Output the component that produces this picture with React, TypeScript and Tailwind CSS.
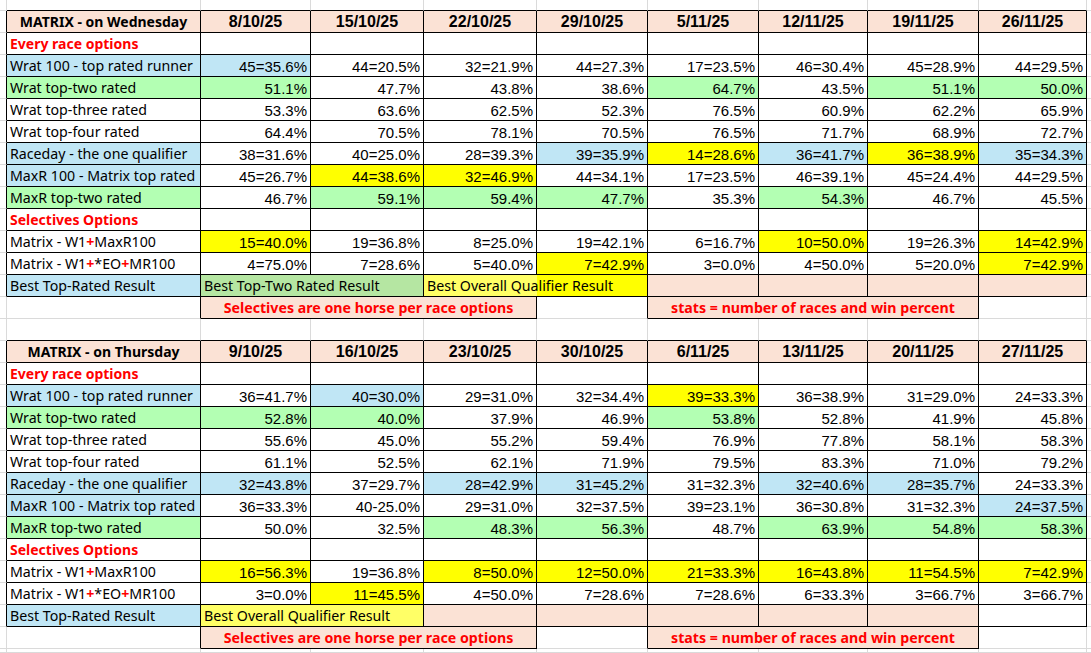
import React from "react";

const BLUE = "bg-[#c0e6f5]";
const GREEN = "bg-[#b3ffb3]";
const YEL = "bg-[#ffff00]";
const PEACH = "bg-[#fbe2d5]";
const PALE = "bg-[#ffff66]";
const G2 = "bg-[#b5e6a2]";
const SPLITY = "bg-[linear-gradient(to_right,#ffff66_113px,#ffff00_113px)]";

type Kind = "label" | "data" | "head" | "date" | "red" | "note" | "box" | "none";
type Cell = { span?: number; inT?: boolean; bg?: string; c?: React.ReactNode; k?: Kind };
type Row = { h: string; cells: Cell[] };

const SPAN: Record<number, string> = {
  1: "col-span-1",
  2: "col-span-2",
  3: "col-span-3",
  4: "col-span-4",
};

const KIND: Record<Kind, string> = {
  label: "justify-start pl-[3px] pt-[1px] font-['Noto_Sans',sans-serif] text-[14.2px] text-black",
  box: "justify-start pl-[3px] pt-[1px] font-['Noto_Sans',sans-serif] text-[14.2px] text-black",
  data: "justify-end pr-[3px] pt-[1px] font-['Liberation_Sans',Arial,sans-serif] text-[15px] text-black",
  head: "justify-center pt-[1px] font-['Noto_Sans',sans-serif] text-[14px] font-bold text-black",
  date: "justify-center pt-[1px] font-['Liberation_Sans',Arial,sans-serif] text-[16px] font-bold text-black",
  red: "justify-start pl-[3px] pt-[1px] font-['Noto_Sans',sans-serif] text-[14px] font-bold text-[#ff0000]",
  note: "justify-center pt-[1px] font-['Noto_Sans',sans-serif] text-[14.2px] font-bold text-[#ff0000]",
  none: "",
};

const P = () => <span className="font-bold text-[#ff0000]">+</span>;

const blank = (n = 1, inT = false): Cell => ({ span: n, inT, k: "none" });

function dataCells(vals: string[]): Cell[] {
  return vals.map((v) => {
    const [t, code] = v.split("|");
    const bg = code === "b" ? BLUE : code === "g" ? GREEN : code === "y" ? YEL : "";
    return { inT: true, bg, c: t, k: "data" as Kind };
  });
}

function line(label: Cell, vals: string[] | null): Row {
  const d = vals ? dataCells(vals) : Array.from({ length: 8 }, () => blank(1, true));
  return { h: "h-[22px]", cells: [blank(), label, ...d, blank()] };
}

type TableDef = {
  title: string;
  dates: string[];
  rows: string[][];
  best: Cell[];
};

function tableRows(t: TableDef): Row[] {
  const labels: [React.ReactNode, string][] = [
    ["Wrat 100 - top rated runner", BLUE],
    ["Wrat top-two rated", GREEN],
    ["Wrat top-three rated", ""],
    ["Wrat top-four rated", ""],
    ["Raceday - the one qualifier", BLUE],
    ["MaxR 100 - Matrix top rated", BLUE],
    ["MaxR top-two rated", GREEN],
  ];
  const out: Row[] = [];
  out.push({
    h: "h-[22px]",
    cells: [
      blank(),
      { inT: true, bg: PEACH, c: t.title, k: "head" },
      ...t.dates.map((d) => ({ inT: true, bg: PEACH, c: d, k: "date" as Kind })),
      blank(),
    ],
  });
  out.push(line({ inT: true, c: "Every race options", k: "red" }, null));
  labels.forEach(([l, bg], i) => out.push(line({ inT: true, bg, c: l, k: "label" }, t.rows[i])));
  out.push(line({ inT: true, c: "Selectives Options", k: "red" }, null));
  out.push(
    line(
      {
        inT: true,
        k: "label",
        c: (
          <>
            Matrix - W1<P />MaxR100
          </>
        ),
      },
      t.rows[7]
    )
  );
  out.push(
    line(
      {
        inT: true,
        k: "label",
        c: (
          <>
            Matrix - W1<P />*EO<P />MR100
          </>
        ),
      },
      t.rows[8]
    )
  );
  out.push({
    h: "h-[22px]",
    cells: [blank(), { inT: true, bg: BLUE, c: "Best Top-Rated Result", k: "label" }, ...t.best, blank()],
  });
  out.push({
    h: "h-[22px]",
    cells: [
      blank(),
      blank(),
      { span: 3, inT: true, bg: PEACH, c: "Selectives are one horse per race options", k: "note" },
      blank(),
      { span: 3, inT: true, bg: PEACH, c: "stats = number of races and win percent", k: "note" },
      blank(),
      blank(),
    ],
  });
  return out;
}

const T1: TableDef = {
  title: "MATRIX - on Wednesday",
  dates: ["8/10/25", "15/10/25", "22/10/25", "29/10/25", "5/11/25", "12/11/25", "19/11/25", "26/11/25"],
  rows: [
    ["45=35.6%|b", "44=20.5%", "32=21.9%", "44=27.3%", "17=23.5%", "46=30.4%", "45=28.9%", "44=29.5%"],
    ["51.1%|g", "47.7%", "43.8%", "38.6%", "64.7%|g", "43.5%", "51.1%|g", "50.0%|g"],
    ["53.3%", "63.6%", "62.5%", "52.3%", "76.5%", "60.9%", "62.2%", "65.9%"],
    ["64.4%", "70.5%", "78.1%", "70.5%", "76.5%", "71.7%", "68.9%", "72.7%"],
    ["38=31.6%", "40=25.0%", "28=39.3%", "39=35.9%|b", "14=28.6%|y", "36=41.7%|b", "36=38.9%|y", "35=34.3%|b"],
    ["45=26.7%", "44=38.6%|y", "32=46.9%|y", "44=34.1%", "17=23.5%", "46=39.1%", "45=24.4%", "44=29.5%"],
    ["46.7%", "59.1%|g", "59.4%|g", "47.7%|g", "35.3%", "54.3%|g", "46.7%", "45.5%"],
    ["15=40.0%|y", "19=36.8%", "8=25.0%", "19=42.1%", "6=16.7%", "10=50.0%|y", "19=26.3%", "14=42.9%|y"],
    ["4=75.0%", "7=28.6%", "5=40.0%", "7=42.9%|y", "3=0.0%", "4=50.0%", "5=20.0%", "7=42.9%|y"],
  ],
  best: [
    { span: 2, inT: true, bg: G2, c: "Best Top-Two Rated Result", k: "box" },
    { span: 2, inT: true, bg: SPLITY, c: "Best Overall Qualifier Result", k: "box" },
    { inT: true, bg: PEACH, k: "none" },
    { inT: true, bg: PEACH, k: "none" },
    { inT: true, bg: PEACH, k: "none" },
    { inT: true, bg: PEACH, k: "none" },
  ],
};

const T2: TableDef = {
  title: "MATRIX - on Thursday",
  dates: ["9/10/25", "16/10/25", "23/10/25", "30/10/25", "6/11/25", "13/11/25", "20/11/25", "27/11/25"],
  rows: [
    ["36=41.7%", "40=30.0%|b", "29=31.0%", "32=34.4%", "39=33.3%|y", "36=38.9%", "31=29.0%", "24=33.3%"],
    ["52.8%|g", "40.0%|g", "37.9%", "46.9%", "53.8%|g", "52.8%", "41.9%", "45.8%"],
    ["55.6%", "45.0%", "55.2%", "59.4%", "76.9%", "77.8%", "58.1%", "58.3%"],
    ["61.1%", "52.5%", "62.1%", "71.9%", "79.5%", "83.3%", "71.0%", "79.2%"],
    ["32=43.8%|b", "37=29.7%", "28=42.9%|b", "31=45.2%|b", "31=32.3%", "32=40.6%|b", "28=35.7%|b", "24=33.3%"],
    ["36=33.3%", "40-25.0%", "29=31.0%", "32=37.5%", "39=23.1%", "36=30.8%", "31=32.3%", "24=37.5%|b"],
    ["50.0%", "32.5%", "48.3%|g", "56.3%|g", "48.7%", "63.9%|g", "54.8%|g", "58.3%|g"],
    ["16=56.3%|y", "19=36.8%", "8=50.0%|y", "12=50.0%|y", "21=33.3%|y", "16=43.8%|y", "11=54.5%|y", "7=42.9%|y"],
    ["3=0.0%", "11=45.5%|y", "4=50.0%", "7=28.6%", "7=28.6%", "6=33.3%", "3=66.7%", "3=66.7%"],
  ],
  best: [
    { span: 2, inT: true, bg: PALE, c: "Best Overall Qualifier Result", k: "box" },
    { inT: true, bg: PEACH, k: "none" },
    { inT: true, bg: PEACH, k: "none" },
    { inT: true, bg: PEACH, k: "none" },
    { inT: true, bg: PEACH, k: "none" },
    { inT: true, bg: PEACH, k: "none" },
    { inT: true, k: "none" },
  ],
};

const emptyRow = (h: string): Row => ({
  h,
  cells: Array.from({ length: 11 }, () => blank()),
});

const ROWS: Row[] = [
  emptyRow("h-[11px]"),
  ...tableRows(T1),
  emptyRow("h-[22px]"),
  ...tableRows(T2),
  emptyRow("h-[4px]"),
];

function colMap(r: Row): Cell[] {
  const m: Cell[] = [];
  r.cells.forEach((c) => {
    for (let i = 0; i < (c.span || 1); i++) m.push(c);
  });
  return m;
}

const GRID =
  "grid grid-cols-[7px_194px_110px_113px_113px_111px_111px_109px_111px_108px_4px]";

export default function App() {
  const maps = ROWS.map(colMap);
  return (
    <div className="w-[1091px] h-[653px] overflow-hidden bg-white flex flex-col">
      {ROWS.map((r, ri) => {
        let col = 0;
        return (
          <div key={ri} className={`${GRID} ${r.h} shrink-0`}>
            {r.cells.map((c, ci) => {
              const span = c.span || 1;
              const start = col;
              const end = col + span - 1;
              col += span;
              const next = maps[ri + 1];
              let belowIn = false;
              if (next) {
                for (let k = start; k <= end; k++) if (next[k] && next[k].inT) belowIn = true;
              }
              const rightN = maps[ri][end + 1];
              const isLast = end === 10;
              const rightBlack = !!c.inT || !!(rightN && rightN.inT);
              const bottomBlack = !!c.inT || belowIn;
              const rb = isLast
                ? ""
                : rightBlack
                ? "border-r border-r-black"
                : "border-r border-r-[#dadada]";
              const bb = bottomBlack ? "border-b border-b-black" : "border-b border-b-[#dadada]";
              return (
                <div
                  key={ci}
                  className={`${SPAN[span]} ${rb} ${bb} ${c.bg || ""} flex items-center overflow-hidden whitespace-nowrap leading-none ${KIND[c.k || "none"]}`}
                >
                  {c.c}
                </div>
              );
            })}
          </div>
        );
      })}
    </div>
  );
}
